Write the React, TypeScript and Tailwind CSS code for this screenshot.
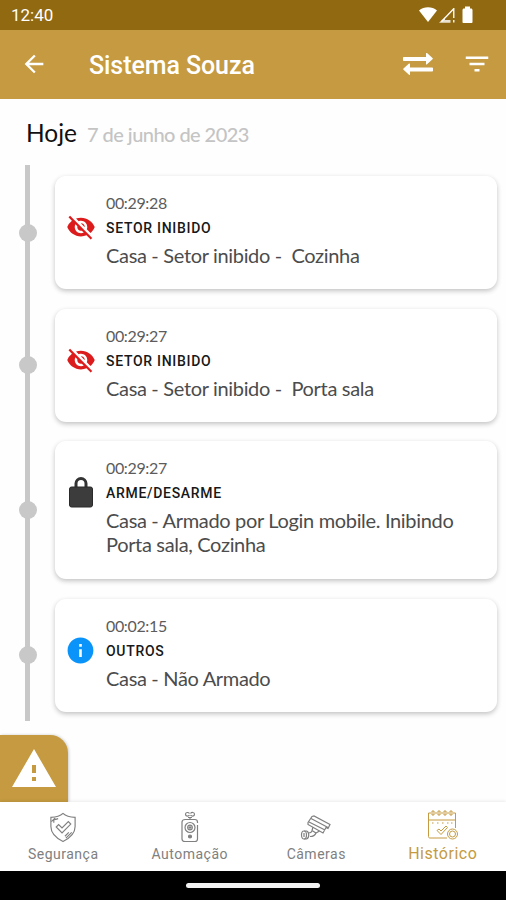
import React from "react";
import { MdArrowBack, MdFilterList, MdInfo, MdVisibilityOff, MdWarning } from "react-icons/md";

const LockIcon = () => (
  <svg width="24" height="32" viewBox="0 0 24 32" fill="#3c3c3c">
    <path d="M7 12V7.500a5 5 0 0 1 10 0V12" fill="none" stroke="#333333" strokeWidth="3" />
    <rect x="0.5" y="11" width="23" height="20" rx="2" stroke="#2a2a2a" />
  </svg>
);

const events = [
  {
    time: "00:29:28",
    title: "SETOR INIBIDO",
    text: "Casa - Setor inibido -  Cozinha",
    icon: <MdVisibilityOff size={30} className="text-[#dc1c1c]" />,
    height: "h-[113px]",
  },
  {
    time: "00:29:27",
    title: "SETOR INIBIDO",
    text: "Casa - Setor inibido -  Porta sala",
    icon: <MdVisibilityOff size={30} className="text-[#dc1c1c]" />,
    height: "h-[113px]",
  },
  {
    time: "00:29:27",
    title: "ARME/DESARME",
    text: "Casa - Armado por Login mobile. Inibindo\nPorta sala, Cozinha",
    icon: <LockIcon />,
    height: "h-[138px]",
  },
  {
    time: "00:02:15",
    title: "OUTROS",
    text: "Casa - Não Armado",
    icon: <MdInfo size={31} className="mt-[2px] text-[#0a94fa]" />,
    height: "h-[113px]",
  },
];

const StatusBar = () => (
  <div className="flex h-[30px] items-center bg-[#916911] pl-[11px] pr-[32px] text-white">
    <span className="mt-[2px] font-['Roboto',sans-serif] text-[17px]">12:40</span>
    <svg width="55" height="18" viewBox="0 0 55 18" fill="currentColor" className="ml-auto">
      <path d="M0 4.500C5 .2 13 .2 18 4.500L9 16z" />
      <path d="M22.500 15.500L34.500 3" fill="none" stroke="currentColor" strokeWidth="1.300" />
      <path d="M20 16.800l6-5.500v2.700h5.500v2.800z" opacity="0.800" />
      <path d="M34 2h1.500v10H34zM34 14h1.500v2.500H34z" opacity="0.900" />
      <path d="M46 2.500V.5h5v2h1c.8 0 1.500.7 1.500 1.500V16c0 .7-.4 1-1 1h-8c-.6 0-1-.3-1-1V4c0-.8.700-1.500 1.500-1.500z" />
    </svg>
  </div>
);

const AppBar = () => (
  <header className="flex h-[69px] items-center bg-[#c59a40] pl-[20px] pr-[14px] text-white">
    <MdArrowBack size={28} className="mb-[2px]" />
    <h1 className="ml-[41px] mt-[2px] font-['Roboto',sans-serif] text-[25px] font-medium tracking-[-0.080px]">
      Sistema Souza
    </h1>
    <svg width="32" height="24" viewBox="0 0 32 24" fill="currentColor" className="mb-[1px] ml-auto">
      <path d="M2 5h22V1.500c0-.6.500-.8 1-.4l5.500 5c.5.400.5.800 0 1.200l-5.500 5c-.5.400-1 .2-1-.4V9H2c-.6 0-1-.4-1-1V6c0-.6.400-1 1-1z" />
      <path d="M30 15.500H8V12c0-.6-.5-.8-1-.4l-5.500 5c-.5.400-.5.800 0 1.200l5.500 5c.5.400 1 .2 1-.4v-3h22c.6 0 1-.4 1-1v-2c0-.5-.4-.9-1-.9z" />
    </svg>
    <MdFilterList size={30} className="mb-[2px] ml-[28px]" />
  </header>
);

const EventCard = ({ event }: { event: (typeof events)[number] }) => (
  <li className="flex items-center">
    <span className="z-10 size-[18px] rounded-full bg-[#c8c8c8]" />
    <article
      className={`ml-[18px] flex w-[442px] rounded-[11px] bg-white pt-[16px] shadow-[0_2px_5px_rgba(0,0,0,0.24)] ${event.height}`}
    >
      <div className="mt-[17px] flex h-[36px] w-[51px] shrink-0 items-center justify-center">{event.icon}</div>
      <div className="font-['Lato',sans-serif]">
        <p className="text-[16px] leading-[22px] tracking-[-0.350px] text-[#5c5c5c]">{event.time}</p>
        <h2 className="mt-[2px] font-['Roboto',sans-serif] text-[14px] leading-[24px] font-medium tracking-[0.700px] text-[#181818]">
          {event.title}
        </h2>
        <p className="mt-[4px] text-[20px] leading-[23.500px] tracking-[-0.330px] whitespace-pre text-[#4c4c4c]">
          {event.text}
        </p>
      </div>
    </article>
  </li>
);

const ShieldIcon = () => (
  <svg width="28" height="31" viewBox="0 0 28 32" fill="none" stroke="currentColor" strokeWidth="1.200">
    <path d="M14 1.500C10.500 5 6 5.500 1.500 5.500V15c0 7 5.500 12 12.500 15.500C21 27 26.500 22 26.500 15V5.500C22 5.500 17.500 5 14 1.500z" />
    <path d="M9 6.800C6.500 7.500 4.500 8 4.500 8v3M2 10l4-4M17 27l6-6M16 25l4-4" />
    <path d="M7 15.500l2.500-2.500 3.500 3.500 6.500-6.500 2.500 2.500-9 9z" />
  </svg>
);

const RemoteIcon = () => (
  <svg width="20" height="32" viewBox="0 0 20 32" fill="none" stroke="currentColor" strokeWidth="1.200">
    <path d="M9.500 4C8.500 5.500 5.500 5.500 5.500 3.300S8.500 1 9.500 2.500M10.500 2.500C11.500 1 14.500 1 14.500 3.300S11.500 5.500 10.500 4M8 6.500h4M10 6.500v2" />
    <path d="M17.500 12v-1c0-1.500-1-2.500-2.500-2.500H5C3.500 8.500 2 9.500 2 11v17c0 1.500 1.500 2.500 3 2.500h10c1.500 0 2.500-1 2.500-2.500V14" />
    <circle cx="10" cy="16.500" r="5" />
    <circle cx="10" cy="16.500" r="2.300" />
    <path d="M10 15v3M8.500 16.500h3" />
    <circle cx="10" cy="25.500" r="1.500" fill="currentColor" />
  </svg>
);

const CameraIcon = () => (
  <svg width="32" height="28" viewBox="0 0 32 28" fill="none" stroke="currentColor" strokeWidth="1.200">
    <path d="M8 7.500l4-6 2-.5 16 8.500-2 4-2-1-3 5.500-15-8.500zM11 3.500l17 9M9 7l16 8" />
    <path d="M13 12l-1 3.500 4 2.500 3.500-2M16 18c-1 2.500-3 3.500-6 3.500M12 16c-.5 1.500-1.500 2-3.500 2" />
    <ellipse cx="4" cy="20" rx="2.500" ry="4" />
    <path d="M4 16h2.500c3 1 3 7 0 8H4M4 18v4" />
  </svg>
);

const CalendarIcon = () => (
  <svg width="32" height="30" viewBox="0 0 32 30" fill="none" stroke="currentColor" strokeWidth="1">
    <path d="M4 3H1.500v23.500c0 1 .5 1.500 1.500 1.500h17M26 3h2.500v15M8 3h2M14 3h2M20 3h2M1.500 10h27" />
    <path d="M5 1h2v4H5zM11 1h2v4h-2zM17 1h2v4h-2zM23 1h2v4h-2z" />
    <path d="M5 13h1.500M10 13h1.500M15 13h1.500M20 13h1.500M24 13h1.500" />
    <path d="M10 20.500l2-1.500 2 2 5-5 1.500 1.500-6.500 7z" />
    <circle cx="25.500" cy="24" r="5" />
    <circle cx="25.500" cy="24" r="3" />
  </svg>
);

const tabs = [
  { label: "Segurança", icon: <ShieldIcon /> },
  { label: "Automação", icon: <RemoteIcon /> },
  { label: "Câmeras", icon: <CameraIcon /> },
];

const BottomNav = () => (
  <nav className="grid h-[69px] grid-cols-4 bg-white font-['Roboto',sans-serif] shadow-[0_-1px_3px_rgba(0,0,0,0.08)]">
    {tabs.map((tab) => (
      <div key={tab.label} className="flex flex-col items-center text-[#808080]">
        <div className="flex h-[42px] items-end justify-center pb-[1px]">{tab.icon}</div>
        <span className="text-[14px] leading-[20px] tracking-[0.500px]">{tab.label}</span>
      </div>
    ))}
    <div className="flex flex-col items-center text-[#c59a40]">
      <div className="flex h-[42px] items-end pb-[4px]">
        <CalendarIcon />
      </div>
      <span className="text-[16px] leading-[20px] tracking-[0.500px]">Histórico</span>
    </div>
  </nav>
);

const App = () => {
  return (
    <div className="flex h-[900px] w-[506px] flex-col overflow-hidden bg-[#fefefe]">
      <StatusBar />
      <AppBar />
      <main className="flex flex-1 flex-col">
        <div className="flex h-[66px] items-baseline pl-[26px] pt-[16px] font-['Lato',sans-serif]">
          <span className="text-[24.500px] text-[#111111]">Hoje</span>
          <span className="ml-[10px] text-[20px] font-medium tracking-[-0.550px] text-[#c4c4c4]">
            7 de junho de 2023
          </span>
        </div>
        <div className="relative h-[556px] pl-[19px] pt-[11px]">
          <div className="absolute top-0 left-[25px] h-full w-[5px] bg-[#c8c8c8]" />
          <ul className="relative flex flex-col gap-[19.500px]">
            {events.map((event, index) => (
              <EventCard key={index} event={event} />
            ))}
          </ul>
        </div>
        <button className="mt-auto flex h-[67px] w-[68px] items-center justify-center rounded-tr-[18px] bg-[#c59a40] text-white shadow-[1px_0_3px_rgba(0,0,0,0.2)]">
          <MdWarning size={48} />
        </button>
      </main>
      <BottomNav />
      <div className="flex h-[29px] items-center justify-center bg-black">
        <div className="h-[5px] w-[134px] rounded-full bg-[#f2f2f2]" />
      </div>
    </div>
  );
};

export default App;
